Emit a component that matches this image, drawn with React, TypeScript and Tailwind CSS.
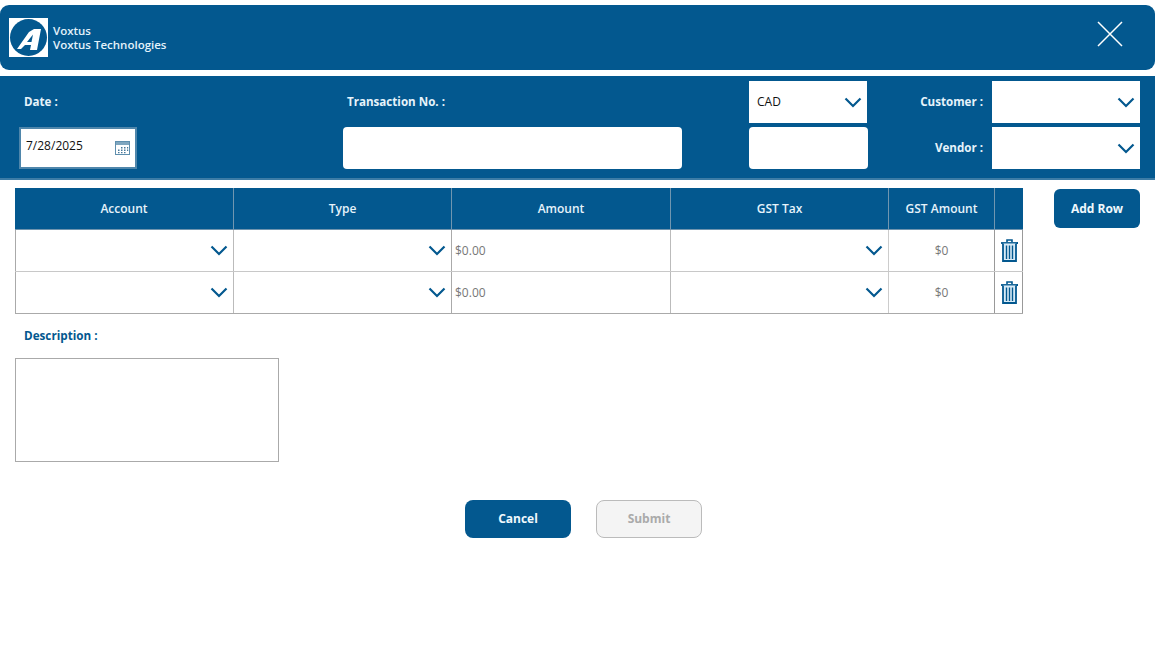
const font = { fontFamily: '"Open Sans", "Noto Sans", sans-serif' };

function Chevron() {
  return (
    <svg width="18" height="11" viewBox="0 0 18 11" fill="none">
      <path d="M1.5 1.5 L9 9 L16.5 1.5" stroke="#03588f" strokeWidth="2.2" />
    </svg>
  );
}

function Logo() {
  return (
    <svg width="39" height="39" viewBox="0 0 39 39">
      <rect width="39" height="39" fill="#fff" />
      <circle cx="19.5" cy="19.5" r="18.5" fill="#03588f" />
      <path d="M8 31 L20 14 L25 11 L32 11 L28 32 L21 32 L22 27 L16 27 L12 31 Z" fill="#fff" />
      <path d="M18 24 L24 16.5 L22.5 24 Z" fill="#03588f" />
    </svg>
  );
}

function CalendarIcon() {
  return (
    <svg width="15" height="14" viewBox="0 0 15 14">
      <rect x="0.5" y="0.5" width="14" height="13" fill="#fff" stroke="#5f8fae" />
      <rect x="1" y="1" width="13" height="3" fill="#7fa6bf" />
      <path d="M6 6h1.5v1.5H6zM9 6h1.5v1.5H9zM12 6h1.2v1.5H12zM3 8.5h1.5V10H3zM6 8.5h1.5V10H6zM9 8.5h1.5V10H9zM12 8.5h1.2V10H12zM3 11h1.5v1.2H3zM6 11h1.5v1.2H6zM9 11h1.5v1.2H9z" fill="#47789a" />
    </svg>
  );
}

function Trash() {
  return (
    <svg width="17" height="23" viewBox="0 0 17 23" fill="none" stroke="#03588f" className="ml-[1px]">
      <path d="M0 4H17" strokeWidth="1.8" />
      <path d="M6 3V1H11V3" strokeWidth="1.6" />
      <path d="M2 4.5V22H15V4.5" strokeWidth="1.8" fill="#d8ebf7" />
      <path d="M5.5 6.5V20M8.5 6.5V20M11.5 6.5V20" strokeWidth="1.4" />
    </svg>
  );
}

const columns = ['Account', 'Type', 'Amount', 'GST Tax', 'GST Amount', ''];
const rows = [0, 1];

function Row({ last }: { last: boolean }) {
  return (
    <div className={`grid grid-cols-[218px_218px_219px_218px_106px_29px] h-[42px] text-[12px] text-[#777] border-b ${last ? 'border-[#aaa]' : 'border-[#c8c8c8]'}`}>
      <div className="flex items-center justify-end pr-[5px] border-l border-[#aaa]">
        <Chevron />
      </div>
      <div className="flex items-center justify-end pr-[5px] border-l border-[#bbb]">
        <Chevron />
      </div>
      <div className="flex items-center pl-[3px] border-l border-[#aaa]">$0.00</div>
      <div className="flex items-center justify-end pr-[5px] border-l border-[#bbb]">
        <Chevron />
      </div>
      <div className="flex items-center justify-center border-l border-[#ccc]">$0</div>
      <div className="flex items-center justify-center border-x border-[#999]">
        <Trash />
      </div>
    </div>
  );
}

export default function App() {
  return (
    <div className="w-[1155px] h-[649px] bg-white overflow-hidden pt-[5px]" style={font}>
      <header className="h-[65px] bg-[#03588f] rounded-[9px] flex items-center pl-[9px] pr-[32px] justify-between">
        <div className="flex items-center gap-[5px]">
          <Logo />
          <div className="text-[11.5px] font-semibold leading-[14px] text-[#e3f2fb]">
            <div>Voxtus</div>
            <div>Voxtus Technologies</div>
          </div>
        </div>
        <svg width="26" height="26" viewBox="0 0 26 26" className="mb-[8px]" stroke="#fff" strokeWidth="1.5">
          <path d="M1 1L25 25M25 1L1 25" />
        </svg>
      </header>

      <section className="mt-[6px] h-[104px] bg-[#03588f] border-b-2 border-[#3c7ca6] pt-[5px] pl-[19px]">
        <div className="grid grid-cols-[324px_406px_119px_124px_148px] grid-rows-[42px_42px] gap-y-[4px] text-[#e6f3fb] text-[11.6px] font-bold">
          <div className="flex items-center pl-[5px]">Date :</div>
          <div className="flex items-center pl-[4px]">Transaction No. :</div>
          <div className="w-[118px] bg-white flex items-center justify-between pl-[8px] pr-[5px] text-[12px] font-normal text-[#111]">
            CAD
            <Chevron />
          </div>
          <div className="flex items-center justify-end pr-[9px]">Customer :</div>
          <div className="bg-white flex items-center justify-end pr-[5px]">
            <Chevron />
          </div>

          <div className="w-[118px] bg-white border-2 border-[#4f86ab] flex items-center justify-between pl-[5px] pr-[5px] text-[12px] font-normal text-[#111]">
            <span className="-mt-[4px]">7/28/2025</span>
            <CalendarIcon />
          </div>
          <div className="w-[339px] bg-white rounded-[4px]" />
          <div className="w-[119px] bg-white rounded-[4px]" />
          <div className="flex items-center justify-end pr-[9px]">Vendor :</div>
          <div className="bg-white flex items-center justify-end pr-[5px]">
            <Chevron />
          </div>
        </div>
      </section>

      <div className="flex items-start mt-[8px] pl-[15px]">
        <div className="w-[1008px]">
          <div className="grid grid-cols-[218px_218px_219px_218px_106px_29px] h-[42px] bg-[#03588f] border-b border-[#6f94ae] text-[#e6f3fb] text-[12px] font-semibold">
            {columns.map((c, i) => (
              <div key={i} className={`flex items-center justify-center ${i > 0 ? 'border-l border-[#7096b0]' : ''}`}>
                {c}
              </div>
            ))}
          </div>
          {rows.map((r) => (
            <Row key={r} last={r === 1} />
          ))}
        </div>
        <button className="ml-[31px] mt-[1px] w-[86px] h-[39px] bg-[#03588f] rounded-[6px] text-[#f0f8fd] text-[12px] font-bold">
          Add Row
        </button>
      </div>

      <div className="pl-[24px] mt-[13px] text-[#03588f] text-[11.7px] font-bold leading-[16px]">Description :</div>
      <div className="ml-[15px] mt-[15px] w-[264px] h-[104px] border border-[#aaa]" />

      <div className="flex gap-[25px] mt-[38px] pl-[465px]">
        <button className="w-[106px] h-[38px] bg-[#03588f] rounded-[8px] text-[#f0f8fd] text-[12px] font-bold">
          Cancel
        </button>
        <button disabled className="w-[106px] h-[38px] bg-[#f4f4f4] border-[1.5px] border-[#bbb] rounded-[8px] text-[#aaa] text-[12px] font-bold">
          Submit
        </button>
      </div>
    </div>
  );
}
